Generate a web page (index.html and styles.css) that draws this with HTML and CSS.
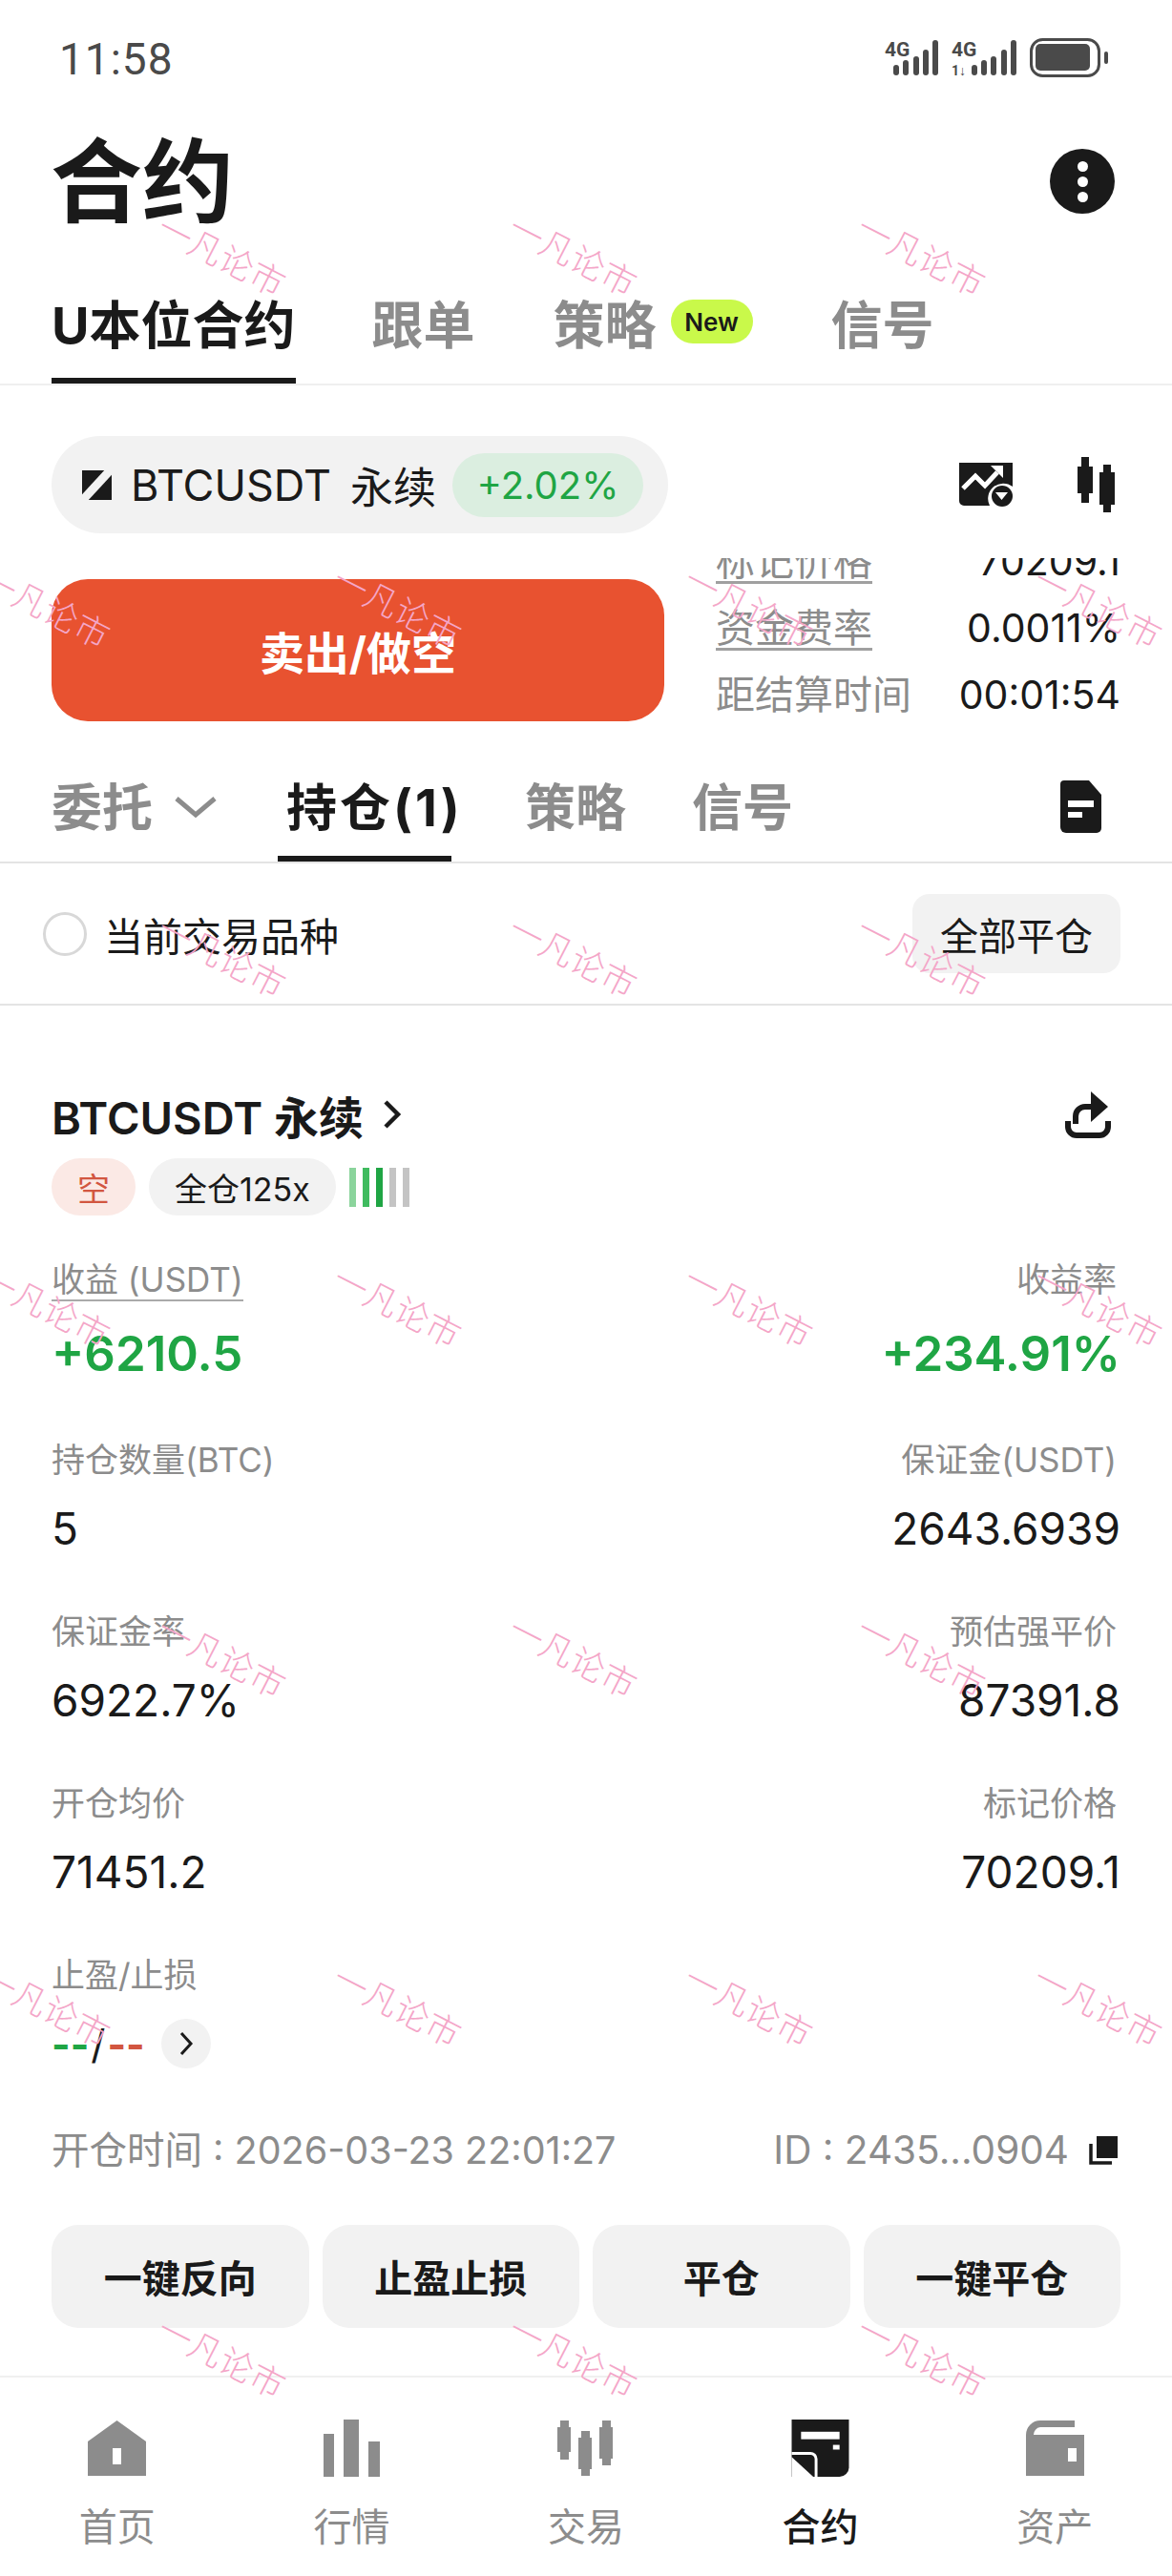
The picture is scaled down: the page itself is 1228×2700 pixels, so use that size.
FILE: index.html
```html
<!DOCTYPE html>
<html lang="zh-CN">
<head>
    <meta charset="UTF-8">
    <meta name="viewport" content="width=device-width, initial-scale=1.0">
    <title>合约</title>
    <link rel="stylesheet" href="styles.css">
</head>
<body>
<div class="page">
    <div class="status">
        <span class="clock">11:58</span>
        <svg class="status-icons" width="236" height="42" viewBox="0 0 236 42" fill="#4a4a4a">
            <text x="1" y="19" class="net">4G</text>
            <rect x="10" y="28" width="6" height="11" rx="3"/><rect x="20" y="23" width="6" height="16" rx="3"/><rect x="31" y="19" width="6" height="20" rx="3"/><rect x="41" y="12" width="6" height="27" rx="3"/><rect x="51" y="2" width="6" height="37" rx="3"/>
            <text x="71" y="19" class="net">4G</text>
            <text x="71" y="39" class="net-small">1↓</text>
            <rect x="92" y="28" width="6" height="11" rx="3"/><rect x="102" y="23" width="6" height="16" rx="3"/><rect x="112" y="19" width="6" height="20" rx="3"/><rect x="123" y="12" width="6" height="27" rx="3"/><rect x="133" y="2" width="6" height="37" rx="3"/>
            <rect x="154.5" y="1.5" width="71" height="38" rx="12" fill="none" stroke="#4a4a4a" stroke-width="3"/>
            <rect x="159" y="6" width="57" height="28" rx="5"/>
            <rect x="231" y="14" width="4" height="13" rx="2"/>
        </svg>
    </div>

    <div class="title-row">
        <h1>合约</h1>
        <span class="more"><i></i><i></i><i></i></span>
    </div>

    <div class="main-tabs">
        <span class="main-tab active">U本位合约</span>
        <span class="main-tab">跟单</span>
        <span class="main-tab">策略<em class="new">New</em></span>
        <span class="main-tab">信号</span>
    </div>

    <div class="ticker-row">
        <div class="ticker">
            <svg width="31" height="31" viewBox="0 0 32 32"><path d="M0 0H24L0 26Z" fill="#1a1a1a"/><path d="M32 5V32H7Z" fill="#1a1a1a"/></svg>
            <span class="pair">BTCUSDT</span>
            <span class="perp">永续</span>
            <span class="change">+2.02%</span>
        </div>
        <div class="ticker-tools">
            <svg width="58" height="48" viewBox="0 0 58 48">
                <path d="M1 1H57V26A16 16 0 0 0 33 46H6A5 5 0 0 1 1 41Z" fill="#1a1a1a"/>
                <path d="M5 28L18 15L28 25L41 11" fill="none" stroke="#fff" stroke-width="5"/>
                <path d="M34 4H47V17Z" fill="#fff"/>
                <circle cx="46" cy="36" r="11" fill="#1a1a1a"/>
                <path d="M39 32H52L45.500 40Z" fill="#fff"/>
            </svg>
            <svg width="42" height="58" viewBox="0 0 42 58" fill="#1a1a1a">
                <rect x="5" y="0" width="8" height="48"/><rect x="1" y="10" width="16" height="28"/>
                <rect x="28" y="8" width="8" height="50"/><rect x="24" y="16" width="16" height="34"/>
            </svg>
        </div>
    </div>

    <div class="order-row">
        <button class="sell">卖出/做空</button>
        <div class="funding">
            <div class="fund-clip"><span class="fund-key under">标记价格</span><span class="fund-val">70209.1</span></div>
            <div class="fund-line"><span class="fund-key under">资金费率</span><span class="fund-val">0.0011%</span></div>
            <div class="fund-line"><span class="fund-key">距结算时间</span><span class="fund-val">00:01:54</span></div>
        </div>
    </div>

    <div class="sub-tabs">
        <span class="sub-tab">委托<svg width="46" height="24" viewBox="0 0 46 24"><path d="M3 4L23 21L43 4" fill="none" stroke="#8c8c8c" stroke-width="5"/></svg></span>
        <span class="sub-tab active">持仓(1)</span>
        <span class="sub-tab">策略</span>
        <span class="sub-tab">信号</span>
        <svg class="doc" width="43" height="55" viewBox="0 0 43 55"><path d="M4 0H30L43 15V50A5 5 0 0 1 38 55H6A6 6 0 0 1 0 49V4A4 4 0 0 1 4 0Z" fill="#1a1a1a"/><rect x="8" y="21" width="27" height="7" fill="#fff"/><rect x="8" y="33" width="15" height="6" fill="#fff"/></svg>
    </div>

    <div class="filter-row">
        <span class="radio"></span>
        <span class="filter-label">当前交易品种</span>
        <span class="close-all">全部平仓</span>
    </div>

    <div class="position">
        <div class="pos-head">
            <span class="pos-name">BTCUSDT 永续</span>
            <svg width="20" height="30" viewBox="0 0 20 30"><path d="M3 2L16 15L3 28" fill="none" stroke="#1a1a1a" stroke-width="4.500"/></svg>
            <svg class="share" width="48" height="49" viewBox="0 0 48 49"><path d="M3 31V37A9 9 0 0 0 12 46H36A9 9 0 0 0 45 37V31" fill="none" stroke="#1a1a1a" stroke-width="6"/><path d="M11 34V26A10 10 0 0 1 21 16H30" fill="none" stroke="#1a1a1a" stroke-width="6"/><path d="M27 0L45 16L27 32Z" fill="#1a1a1a"/></svg>
        </div>
        <div class="tags">
            <span class="tag short">空</span>
            <span class="tag">全仓125x</span>
            <span class="bars"><i class="b1"></i><i class="b2"></i><i class="b3"></i><i class="b4"></i><i class="b4"></i></span>
        </div>

        <div class="pnl-row">
            <div class="cell"><span class="key under">收益 (USDT)</span><span class="pnl">+6210.5</span></div>
            <div class="cell right"><span class="key">收益率</span><span class="pnl">+234.91%</span></div>
        </div>
        <div class="data-row">
            <div class="cell"><span class="key">持仓数量(BTC)</span><span class="val">5</span></div>
            <div class="cell right"><span class="key">保证金(USDT)</span><span class="val">2643.6939</span></div>
        </div>
        <div class="data-row">
            <div class="cell"><span class="key">保证金率</span><span class="val">6922.7%</span></div>
            <div class="cell right"><span class="key">预估强平价</span><span class="val">87391.8</span></div>
        </div>
        <div class="data-row">
            <div class="cell"><span class="key">开仓均价</span><span class="val">71451.2</span></div>
            <div class="cell right"><span class="key">标记价格</span><span class="val">70209.1</span></div>
        </div>
        <div class="data-row">
            <div class="cell">
                <span class="key">止盈/止损</span>
                <span class="tpsl"><b class="green">--</b><b class="slash">/</b><b class="red">--</b>
                    <span class="round"><svg width="16" height="26" viewBox="0 0 16 26"><path d="M3 2L13 13L3 24" fill="none" stroke="#1a1a1a" stroke-width="3"/></svg></span>
                </span>
            </div>
        </div>

        <div class="meta-row">
            <span>开仓时间 : 2026-03-23 22:01:27</span>
            <span class="meta-id">ID : 2435...0904
                <svg width="30" height="30" viewBox="0 0 30 30"><rect x="8" y="0" width="22" height="23" fill="#1a1a1a"/><path d="M2 8V28H24" fill="none" stroke="#1a1a1a" stroke-width="3.500"/></svg>
            </span>
        </div>

        <div class="actions">
            <span class="action">一键反向</span>
            <span class="action">止盈止损</span>
            <span class="action">平仓</span>
            <span class="action">一键平仓</span>
        </div>
    </div>

    <nav class="bottom-nav">
        <div class="nav-item">
            <svg width="61" height="60" viewBox="0 0 61 60"><path d="M0 23L30.500 1L61 23V59H0Z" fill="#8c8c8c"/><rect x="26" y="30" width="9" height="17" fill="#fff"/></svg>
            <span>首页</span>
        </div>
        <div class="nav-item">
            <svg width="59" height="60" viewBox="0 0 59 60" fill="#8c8c8c"><rect x="0" y="15" width="11" height="45"/><rect x="21" y="0" width="16" height="60"/><rect x="47" y="23" width="12" height="37"/></svg>
            <span>行情</span>
        </div>
        <div class="nav-item">
            <svg width="59" height="60" viewBox="0 0 59 60" fill="#8c8c8c"><rect x="3" y="1" width="9" height="41"/><rect x="0" y="8" width="14" height="26"/><rect x="25" y="12" width="9" height="47"/><rect x="22" y="19" width="14" height="33"/><rect x="47" y="1" width="9" height="47"/><rect x="44" y="8" width="14" height="33"/></svg>
            <span>交易</span>
        </div>
        <div class="nav-item active">
            <svg width="61" height="60" viewBox="0 0 61 61">
                <path d="M0 0H61V51A10 10 0 0 1 51 61H0Z" fill="#1a1a1a"/>
                <rect x="10" y="13" width="41" height="8" fill="#fff"/>
                <rect x="44" y="27" width="7" height="5" fill="#fff"/>
                <path d="M0 36H20A6 6 0 0 1 26 42V61" fill="none" stroke="#fff" stroke-width="3"/>
                <path d="M0 40L23 61H0Z" fill="#fff"/>
            </svg>
            <span>合约</span>
        </div>
        <div class="nav-item">
            <svg width="61" height="60" viewBox="0 0 61 60"><path d="M0 59V16A15 15 0 0 1 15 1H51V8H15A8 8 0 0 0 8 16H61V59Z" fill="#8c8c8c"/><rect x="44" y="30" width="9" height="14" fill="#fff"/></svg>
            <span>资产</span>
        </div>
    </nav>

    <div class="watermarks">
        <span class="wm wm-a r1 c1">一凡论市</span><span class="wm wm-a r1 c2">一凡论市</span><span class="wm wm-a r1 c3">一凡论市</span>
        <span class="wm wm-b r2 c0">一凡论市</span><span class="wm wm-b r2 c1">一凡论市</span><span class="wm wm-b r2 c2">一凡论市</span><span class="wm wm-b r2 c3">一凡论市</span>
        <span class="wm wm-a r3 c1">一凡论市</span><span class="wm wm-a r3 c2">一凡论市</span><span class="wm wm-a r3 c3">一凡论市</span>
        <span class="wm wm-b r4 c0">一凡论市</span><span class="wm wm-b r4 c1">一凡论市</span><span class="wm wm-b r4 c2">一凡论市</span><span class="wm wm-b r4 c3">一凡论市</span>
        <span class="wm wm-a r5 c1">一凡论市</span><span class="wm wm-a r5 c2">一凡论市</span><span class="wm wm-a r5 c3">一凡论市</span>
        <span class="wm wm-b r6 c0">一凡论市</span><span class="wm wm-b r6 c1">一凡论市</span><span class="wm wm-b r6 c2">一凡论市</span><span class="wm wm-b r6 c3">一凡论市</span>
        <span class="wm wm-a r7 c1">一凡论市</span><span class="wm wm-a r7 c2">一凡论市</span><span class="wm wm-a r7 c3">一凡论市</span>
    </div>
</div>
</body>
</html>
```

FILE: styles.css
```css
* {
    box-sizing: border-box;
}
body {
    margin: 0;
    background: #fff;
    color: #1a1a1a;
    font-family: Inter, "Noto Sans CJK SC", sans-serif;
}
.page {
    position: relative;
    width: 1228px;
    height: 2700px;
    overflow: hidden;
}

/* status bar */
.status {
    height: 140px;
    padding: 36px 66px 0 62px;
    display: flex;
    justify-content: space-between;
    align-items: flex-start;
}
.clock {
    font-family: Roboto, sans-serif;
    font-size: 46px;
    line-height: 52px;
    letter-spacing: 1px;
    color: #4a4a4a;
}
.status-icons {
    margin-top: 4px;
}
.net {
    font-family: Roboto, sans-serif;
    font-size: 21px;
    font-weight: 700;
}
.net-small {
    font-family: Roboto, sans-serif;
    font-size: 14px;
    font-weight: 700;
}

.title-row {
    height: 100px;
    padding: 0 60px 0 53px;
    display: flex;
    justify-content: space-between;
    align-items: center;
}
h1 {
    margin: 0;
    font-size: 96px;
    line-height: 100px;
    font-weight: 700;
}
.more {
    width: 68px;
    height: 68px;
    border-radius: 50%;
    background: #1a1a1a;
    display: flex;
    flex-direction: column;
    align-items: center;
    justify-content: center;
    gap: 5px;
}
.more i {
    width: 11px;
    height: 11px;
    border-radius: 50%;
    background: #fff;
}

.main-tabs {
    height: 164px;
    padding: 58px 0 0 54px;
    display: flex;
    align-items: flex-start;
    gap: 82px;
    border-bottom: 2px solid #efefef;
}
.main-tab {
    position: relative;
    display: flex;
    align-items: center;
    height: 104px;
    font-size: 54px;
    font-weight: 700;
    color: #8c8c8c;
    padding-bottom: 26px;
}
.main-tab.active {
    color: #1a1a1a;
    margin-right: -2px;
}
.main-tab.active::after {
    content: "";
    position: absolute;
    left: 0;
    right: 0;
    bottom: 0;
    height: 6px;
    background: #1a1a1a;
}
.new {
    margin-left: 15px;
    width: 86px;
    height: 46px;
    border-radius: 23px;
    background: #c9f94a;
    color: #1a1a1a;
    font-style: normal;
    font-size: 26px;
    font-weight: 600;
    display: flex;
    align-items: center;
    justify-content: center;
}

.ticker-row {
    margin-top: 53px;
    height: 102px;
    padding: 0 58px 0 54px;
    display: flex;
    justify-content: space-between;
    align-items: center;
}
.ticker {
    width: 646px;
    height: 102px;
    border-radius: 51px;
    background: #f2f2f2;
    padding: 0 26px 0 32px;
    display: flex;
    align-items: center;
    white-space: nowrap;
}
.pair {
    margin-left: 20px;
    font-size: 45px;
}
.perp {
    margin-left: 20px;
    font-size: 45px;
}
.change {
    margin-left: auto;
    width: 200px;
    height: 67px;
    border-radius: 34px;
    background: #dbeee0;
    color: #1fa544;
    font-size: 40px;
    display: flex;
    align-items: center;
    justify-content: center;
}
.ticker-tools {
    display: flex;
    align-items: center;
    gap: 66px;
}

.order-row {
    margin-top: 48px;
    height: 170px;
    padding: 0 54px;
    display: flex;
    justify-content: space-between;
}
.sell {
    width: 642px;
    height: 149px;
    border: none;
    border-radius: 38px;
    background: #e85230;
    color: #fff;
    font-family: inherit;
    font-size: 47px;
    font-weight: 700;
}
.funding {
    width: 424px;
    margin-top: -22px;
    font-size: 41px;
    line-height: 42px;
    color: #8c8c8c;
}
.fund-clip {
    height: 27px;
    overflow: hidden;
    display: flex;
    justify-content: space-between;
    align-items: flex-end;
}
.fund-line {
    margin-top: 25px;
    height: 45px;
    display: flex;
    justify-content: space-between;
    align-items: flex-start;
}
.fund-key.under {
    border-bottom: 3px solid #a0a0a0;
}
.fund-clip .fund-val {
    margin-bottom: 3px;
}
.fund-val {
    color: #1a1a1a;
}

.sub-tabs {
    margin-top: 6px;
    height: 122px;
    padding: 0 74px 0 54px;
    display: flex;
    align-items: flex-start;
    gap: 69px;
    border-bottom: 2px solid #e4e4e4;
}
.sub-tab {
    display: flex;
    align-items: center;
    height: 120px;
    font-size: 53px;
    font-weight: 700;
    color: #8c8c8c;
    gap: 22px;
    white-space: nowrap;
}
.sub-tab svg {
    margin-top: 4px;
}
.sub-tab.active {
    width: 182px;
    margin: 0 8px 0 -6px;
    padding-left: 9px;
    letter-spacing: 3px;
    color: #1a1a1a;
    box-shadow: inset 0 -6px 0 #1a1a1a;
}
.doc {
    margin: 35px 0 0 auto;
}

.filter-row {
    height: 149px;
    padding: 0 54px 0 45px;
    display: flex;
    align-items: center;
    border-bottom: 2px solid #e4e4e4;
}
.radio {
    width: 46px;
    height: 46px;
    border-radius: 50%;
    border: 3px solid #d8d8d8;
}
.filter-label {
    margin-left: 18px;
    font-size: 41px;
}
.close-all {
    margin-left: auto;
    width: 218px;
    height: 83px;
    border-radius: 18px;
    background: #f2f2f2;
    font-size: 40px;
    display: flex;
    align-items: center;
    justify-content: center;
}

.position {
    padding: 0 54px;
}
.pos-head {
    margin-top: 87px;
    height: 54px;
    display: flex;
    align-items: center;
    gap: 20px;
}
.pos-name {
    font-size: 47px;
    font-weight: 600;
}
.share {
    margin-left: auto;
    margin-right: 10px;
}
.tags {
    margin-top: 19px;
    height: 60px;
    display: flex;
    align-items: center;
    gap: 14px;
}
.tag {
    height: 60px;
    padding: 0 27px;
    border-radius: 30px;
    background: #f2f2f2;
    font-size: 34px;
    display: flex;
    align-items: center;
}
.tag.short {
    background: #fbe9e5;
    color: #d25640;
}
.bars {
    display: flex;
    gap: 7px;
}
.bars i {
    width: 7px;
    height: 41px;
}
.b1 { background: #8bd49c; }
.b2 { background: #3fbb5f; }
.b3 { background: #1fa544; }
.b4 { background: #c4c4c4; }

.pnl-row, .data-row {
    display: flex;
    justify-content: space-between;
}
.pnl-row {
    margin-top: 46px;
}
.data-row {
    margin-top: 59px;
}
.cell {
    display: flex;
    flex-direction: column;
    align-items: flex-start;
}
.cell.right {
    align-items: flex-end;
}
.key {
    font-size: 35px;
    line-height: 42px;
    color: #8c8c8c;
}
.right .key {
    margin-right: 4px;
}
.key.under {
    border-bottom: 2px solid #aaa;
    margin-bottom: -2px;
}
.val {
    margin-top: 23px;
    font-size: 46px;
    line-height: 56px;
}
.pnl {
    margin-top: 25px;
    margin-bottom: -1px;
    font-size: 51px;
    line-height: 64px;
    font-weight: 600;
    color: #1fa544;
}
.tpsl {
    margin-top: 23px;
    height: 56px;
    display: flex;
    align-items: center;
    font-size: 42px;
}
.tpsl b {
    font-weight: 700;
}
.green { color: #1fa544; }
.red { color: #d25640; }
.tpsl .slash {
    font-weight: 400;
    margin: 0 2px;
}
.round {
    margin-left: 17px;
    width: 52px;
    height: 52px;
    border-radius: 50%;
    background: #f2f2f2;
    display: flex;
    align-items: center;
    justify-content: center;
}

.meta-row {
    margin-top: 59px;
    display: flex;
    justify-content: space-between;
    align-items: center;
    font-size: 39.5px;
    line-height: 50px;
    color: #8c8c8c;
}
.meta-id {
    display: flex;
    align-items: center;
    gap: 21px;
    font-size: 40.5px;
}
.meta-id svg {
    margin-right: 3px;
}
.actions {
    margin-top: 53px;
    display: grid;
    grid-template-columns: repeat(4, 1fr);
    gap: 14px;
}
.action {
    height: 108px;
    border-radius: 28px;
    background: #f2f2f2;
    font-size: 40px;
    font-weight: 700;
    display: flex;
    align-items: center;
    justify-content: center;
}

.bottom-nav {
    position: absolute;
    left: 0;
    right: 0;
    bottom: 0;
    height: 210px;
    padding: 44px 0 0;
    border-top: 2px solid #f0f0f0;
    display: flex;
    justify-content: space-around;
}
.nav-item {
    width: 246px;
    display: flex;
    flex-direction: column;
    align-items: center;
    gap: 29px;
    font-size: 40px;
    color: #8c8c8c;
    line-height: 48px;
}
.nav-item.active {
    color: #1a1a1a;
    font-weight: 500;
}

/* watermark lies over the whole screen */
.watermarks {
    position: absolute;
    inset: 0;
    pointer-events: none;
}
.wm {
    position: absolute;
    width: 150px;
    font-size: 36px;
    line-height: 40px;
    font-weight: 300;
    color: #f4a6c8;
    transform: rotate(27deg);
    white-space: nowrap;
    text-align: center;
}
.wm-a.c1 { left: 157px; }
.wm-a.c2 { left: 525px; }
.wm-a.c3 { left: 890px; }
.wm-b.c0 { left: -27px; }
.wm-b.c1 { left: 341px; }
.wm-b.c2 { left: 709px; }
.wm-b.c3 { left: 1075px; }
.r1 { top: 248px; }
.r2 { top: 617px; }
.r3 { top: 983px; }
.r4 { top: 1350px; }
.r5 { top: 1717px; }
.r6 { top: 2083px; }
.r7 { top: 2451px; }
```
